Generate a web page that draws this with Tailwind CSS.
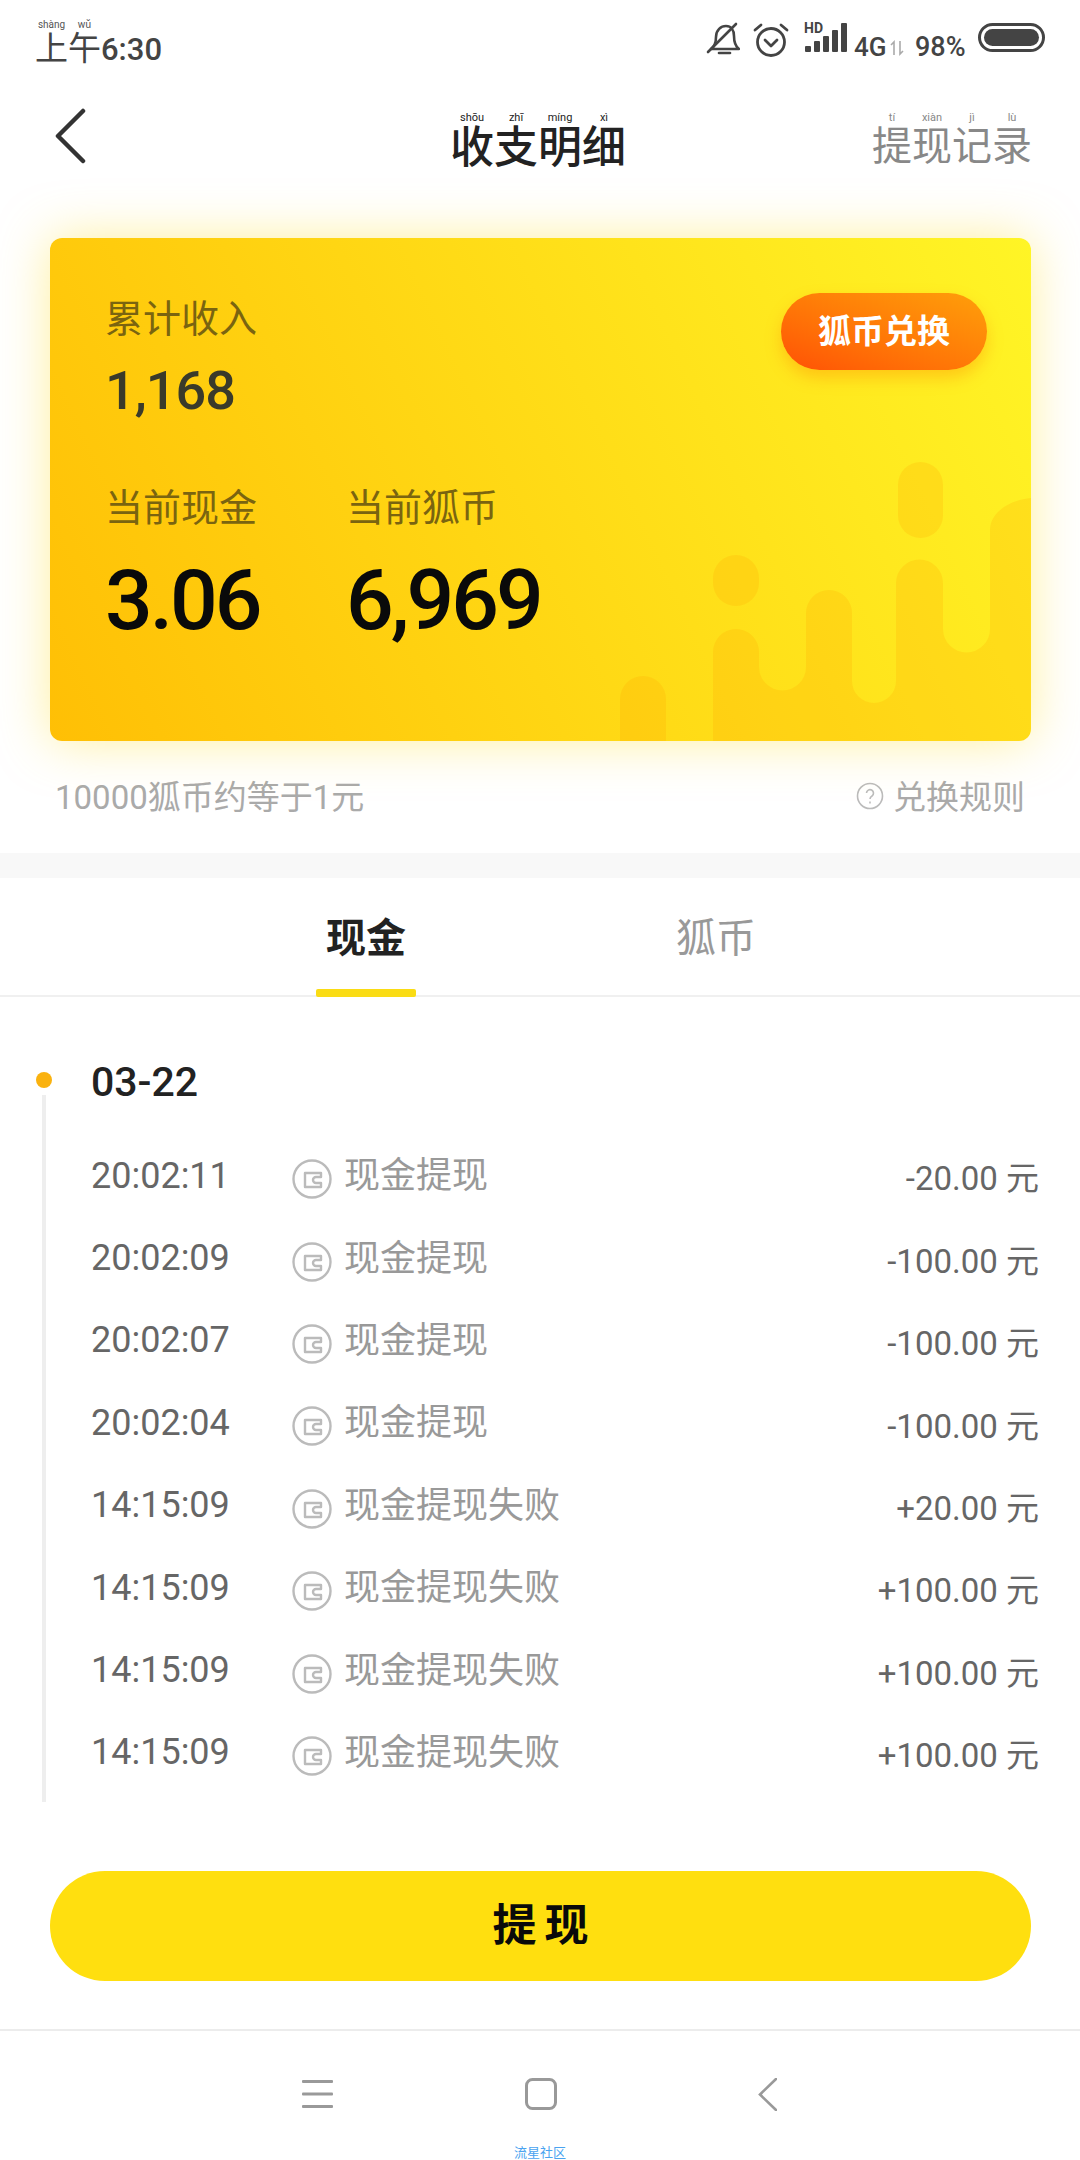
<!DOCTYPE html>
<html lang="zh-CN">
<head>
    <meta charset="UTF-8">
    <meta name="viewport" content="width=device-width, initial-scale=1.0">
    <title>收支明细</title>
    <script src="https://cdn.jsdelivr.net/npm/@tailwindcss/browser@4"></script>
</head>
<body class="bg-white font-[Roboto,'Noto_Sans_CJK_SC',sans-serif]">
<div class="w-[1080px] h-[2160px] overflow-hidden flex flex-col">

    <!-- Status bar -->
    <div class="h-[70px] flex justify-between pl-[35px] pr-[35px] text-[#444] shrink-0">
        <div class="flex items-baseline pt-[19px] h-[70px] leading-[34px]">
            <span class="text-[33px]"><ruby>上<rt class="text-[10px] leading-[10px] text-[#555]">shàng</rt></ruby><ruby>午<rt class="text-[10px] leading-[10px] text-[#555]">wǔ</rt></ruby></span>
            <span class="text-[31px] font-medium">6:30</span>
        </div>
        <div class="flex items-start pt-[22px]">
            <svg class="w-[34px] h-[34px] mr-[13px] -ml-[1px]" viewBox="0 0 34 34" fill="none" stroke="#444" stroke-width="2.6" stroke-linecap="round" stroke-linejoin="round">
                <path d="M5 27 C9 24 10 20 10 15 C10 8 15 4 20 4 C25 4 28 8 28 14 C28 20 29 24 33 27 H5 Z"/>
                <path d="M13 31 H24"/>
                <path d="M2 30 L30 2"/>
            </svg>
            <svg class="w-[36px] h-[36px] mr-[15px]" viewBox="0 0 36 36" fill="none" stroke="#444" stroke-width="2.8" stroke-linecap="round" stroke-linejoin="round">
                <circle cx="18" cy="20" r="13.5"/>
                <path d="M12 18 L18 24 L24 18"/>
                <path d="M2 8 L8 3"/>
                <path d="M34 8 L28 3"/>
            </svg>
            <div class="relative w-[44px] h-[32px] mr-[6px]">
                <svg class="w-[44px] h-[32px]" viewBox="0 0 44 32" fill="#444">
                    <rect x="1" y="24" width="6" height="6" rx="1"/>
                    <rect x="10" y="19" width="6" height="11" rx="1"/>
                    <rect x="19" y="14" width="6" height="16" rx="1"/>
                    <rect x="28" y="8" width="6" height="22" rx="1"/>
                    <rect x="37" y="1" width="6" height="29" rx="1"/>
                </svg>
                <span class="absolute left-0 top-[-2px] text-[14px] leading-[16px] font-bold">HD</span>
            </div>
            <span class="text-[26px] leading-[26px] font-medium mt-[12px] w-[36px]">4G</span>
            <svg class="w-[14px] h-[16px] mt-[18px] mr-[11px]" viewBox="0 0 14 16" fill="none" stroke="#aaa" stroke-width="1.6">
                <path d="M4 15 V2 L1 5"/>
                <path d="M10 1 V14 L13 11"/>
            </svg>
            <span class="text-[27px] leading-[26px] font-medium mt-[12px] w-[63px]">98%</span>
            <div class="w-[67px] h-[29px] mt-[1px] rounded-full border-[3px] border-[#444] p-[3px]">
                <div class="w-full h-full rounded-full bg-[#444]"></div>
            </div>
        </div>
    </div>

    <!-- Title bar -->
    <div class="h-[168px] flex items-start pl-[54px] pr-[48px] pt-[36px] shrink-0">
        <svg class="w-[32px] h-[56px] mt-[2px]" viewBox="0 0 32 56" fill="none" stroke="#333" stroke-width="4.5" stroke-linecap="round" stroke-linejoin="round">
            <path d="M29 3 L4 28 L29 53"/>
        </svg>
        <div class="flex-1 text-center text-[44px] leading-[46px] font-medium text-[#222] pl-[118px] mt-[6px]">
            <ruby>收<rt class="text-[11px] leading-[12px] font-normal">shōu</rt></ruby><ruby>支<rt class="text-[11px] leading-[12px] font-normal">zhī</rt></ruby><ruby>明<rt class="text-[11px] leading-[12px] font-normal">míng</rt></ruby><ruby>细<rt class="text-[11px] leading-[12px] font-normal">xì</rt></ruby>
        </div>
        <div class="w-[160px] text-[40px] leading-[46px] text-[#888] mt-[6px]">
            <ruby>提<rt class="text-[11px] leading-[12px]">tí</rt></ruby><ruby>现<rt class="text-[11px] leading-[12px]">xiàn</rt></ruby><ruby>记<rt class="text-[11px] leading-[12px]">jì</rt></ruby><ruby>录<rt class="text-[11px] leading-[12px]">lù</rt></ruby>
        </div>
    </div>

    <!-- Balance card -->
    <div class="pl-[50px] pr-[49px] shrink-0">
        <div class="relative h-[503px] rounded-[12px] overflow-hidden bg-linear-[65deg] from-[#ffbf05] to-[#fff526] shadow-[0_0_50px_rgba(255,225,60,0.5)] pl-[55px] pt-[58px]">
            <svg class="absolute right-0 bottom-0 w-[441px] h-[303px]" viewBox="590 438 441 303" fill="#ffa000" fill-opacity="0.2">
                <path d="M713 741 V652 a23 23 0 0 1 46 0 V667 a23.5 23.5 0 0 0 47 0 V613 a23 23 0 0 1 46 0 V681 a22 22 0 0 0 44 0 V583 a23.5 23.5 0 0 1 47 0 V629 a23.5 23.5 0 0 0 47 0 V530 C990 512 1010 500 1031 498 V741 Z"/>
                <path d="M620 741 V699 a23 23 0 0 1 46 0 V741 Z"/>
                <rect x="713" y="555" width="46" height="51" rx="23"/>
                <rect x="898" y="462" width="45" height="76" rx="22.5"/>
            </svg>
            <div class="relative text-[38px] leading-[46px] text-[#7a6410]">累计收入</div>
            <div class="relative mt-[17px] text-[54px] leading-[64px] font-medium tracking-[-1px] text-[#3a3a2a]">1,168</div>
            <div class="relative flex mt-[62px]">
                <div class="w-[241px]">
                    <div class="text-[38px] leading-[46px] text-[#7a6410]">当前现金</div>
                    <div class="mt-[24px] text-[84px] leading-[92px] font-medium tracking-[-3px] text-[#0a0a0a]">3.06</div>
                </div>
                <div>
                    <div class="text-[38px] leading-[46px] text-[#7a6410]">当前狐币</div>
                    <div class="mt-[24px] text-[84px] leading-[92px] font-medium tracking-[-3px] text-[#0a0a0a]">6,969</div>
                </div>
            </div>
            <div class="absolute right-[44px] top-[55px] w-[206px] h-[77px] rounded-full bg-linear-to-tr from-[#ff5005] to-[#ff9f0a] shadow-[0_8px_16px_rgba(255,130,0,0.35)] flex items-center justify-center text-[33px] font-bold text-white">狐币兑换</div>
        </div>
    </div>

    <!-- Exchange note -->
    <div class="h-[112px] pl-[55px] pr-[55px] pt-[35px] flex justify-between shrink-0 text-[#aaa]">
        <span class="text-[33px] leading-[44px]">10000狐币约等于1元</span>
        <span class="flex items-center h-[44px] text-[33px]">
            <svg class="w-[28px] h-[28px] mr-[9px] -mt-[4px]" viewBox="0 0 28 28" fill="none" stroke="#bbb" stroke-width="1.6">
                <circle cx="14" cy="14" r="12.5"/>
                <path d="M10.5 11 a3.5 3.5 0 1 1 5.5 3 c-1.4 .9 -2 1.6 -2 3"/>
                <path d="M14 19.5 V21.5"/>
            </svg>
            兑换规则
        </span>
    </div>

    <div class="h-[25px] bg-[#f8f8f8] shrink-0"></div>

    <!-- Tabs -->
    <div class="h-[119px] border-b-2 border-[#f0f0f0] flex shrink-0 relative">
        <div class="relative w-[100px] ml-[316px] flex justify-center pt-[38px] text-[40px] leading-[46px] font-bold text-[#222]">
            现金
            <div class="absolute left-0 right-0 -bottom-[2px] h-[8px] rounded-[2px] bg-[#fadc14]"></div>
        </div>
        <div class="ml-[260px] pt-[38px] text-[40px] leading-[46px] text-[#999]">狐币</div>
    </div>

    <!-- Timeline -->
    <div class="h-[874px] flex shrink-0">
        <div class="w-[91px] pl-[36px] pt-[75px] shrink-0">
            <div class="w-4 h-4 rounded-full bg-[#fab20f]"></div>
            <div class="ml-[6px] mt-[7px] w-[4px] h-[707px] bg-[#eeeeee]"></div>
        </div>
        <div class="flex-1 pt-[46px] pr-[41px]">
            <div class="h-[80px] flex items-center text-[41px] font-medium text-[#222]">03-22</div>
            <div id="rows" class="mt-[12px]">
                <div class="h-[82.4px] flex items-center">
                    <span class="w-[201px] -mt-[1px] text-[36px] text-[#666]">20:02:11</span>
                    <svg class="w-[40px] h-[40px] mt-[6px] mr-[12px]" viewBox="0 0 40 40" fill="none" stroke="#bbb" stroke-width="2.4"><circle cx="20" cy="20" r="18.5"/><path d="M29 14 H13 V28 H29 V24 H24 a3 3 0 0 1 0 -6 H29 Z" stroke-linejoin="round"/></svg>
                    <span class="text-[36px] text-[#999]">现金提现</span>
                    <span class="ml-auto mt-[6px] text-[33px] text-[#666]">-20.00 元</span>
                </div>
                <div class="h-[82.4px] flex items-center">
                    <span class="w-[201px] -mt-[1px] text-[36px] text-[#666]">20:02:09</span>
                    <svg class="w-[40px] h-[40px] mt-[6px] mr-[12px]" viewBox="0 0 40 40" fill="none" stroke="#bbb" stroke-width="2.4"><circle cx="20" cy="20" r="18.5"/><path d="M29 14 H13 V28 H29 V24 H24 a3 3 0 0 1 0 -6 H29 Z" stroke-linejoin="round"/></svg>
                    <span class="text-[36px] text-[#999]">现金提现</span>
                    <span class="ml-auto mt-[6px] text-[33px] text-[#666]">-100.00 元</span>
                </div>
                <div class="h-[82.4px] flex items-center">
                    <span class="w-[201px] -mt-[1px] text-[36px] text-[#666]">20:02:07</span>
                    <svg class="w-[40px] h-[40px] mt-[6px] mr-[12px]" viewBox="0 0 40 40" fill="none" stroke="#bbb" stroke-width="2.4"><circle cx="20" cy="20" r="18.5"/><path d="M29 14 H13 V28 H29 V24 H24 a3 3 0 0 1 0 -6 H29 Z" stroke-linejoin="round"/></svg>
                    <span class="text-[36px] text-[#999]">现金提现</span>
                    <span class="ml-auto mt-[6px] text-[33px] text-[#666]">-100.00 元</span>
                </div>
                <div class="h-[82.4px] flex items-center">
                    <span class="w-[201px] -mt-[1px] text-[36px] text-[#666]">20:02:04</span>
                    <svg class="w-[40px] h-[40px] mt-[6px] mr-[12px]" viewBox="0 0 40 40" fill="none" stroke="#bbb" stroke-width="2.4"><circle cx="20" cy="20" r="18.5"/><path d="M29 14 H13 V28 H29 V24 H24 a3 3 0 0 1 0 -6 H29 Z" stroke-linejoin="round"/></svg>
                    <span class="text-[36px] text-[#999]">现金提现</span>
                    <span class="ml-auto mt-[6px] text-[33px] text-[#666]">-100.00 元</span>
                </div>
                <div class="h-[82.4px] flex items-center">
                    <span class="w-[201px] -mt-[1px] text-[36px] text-[#666]">14:15:09</span>
                    <svg class="w-[40px] h-[40px] mt-[6px] mr-[12px]" viewBox="0 0 40 40" fill="none" stroke="#bbb" stroke-width="2.4"><circle cx="20" cy="20" r="18.5"/><path d="M29 14 H13 V28 H29 V24 H24 a3 3 0 0 1 0 -6 H29 Z" stroke-linejoin="round"/></svg>
                    <span class="text-[36px] text-[#999]">现金提现失败</span>
                    <span class="ml-auto mt-[6px] text-[33px] text-[#666]">+20.00 元</span>
                </div>
                <div class="h-[82.4px] flex items-center">
                    <span class="w-[201px] -mt-[1px] text-[36px] text-[#666]">14:15:09</span>
                    <svg class="w-[40px] h-[40px] mt-[6px] mr-[12px]" viewBox="0 0 40 40" fill="none" stroke="#bbb" stroke-width="2.4"><circle cx="20" cy="20" r="18.5"/><path d="M29 14 H13 V28 H29 V24 H24 a3 3 0 0 1 0 -6 H29 Z" stroke-linejoin="round"/></svg>
                    <span class="text-[36px] text-[#999]">现金提现失败</span>
                    <span class="ml-auto mt-[6px] text-[33px] text-[#666]">+100.00 元</span>
                </div>
                <div class="h-[82.4px] flex items-center">
                    <span class="w-[201px] -mt-[1px] text-[36px] text-[#666]">14:15:09</span>
                    <svg class="w-[40px] h-[40px] mt-[6px] mr-[12px]" viewBox="0 0 40 40" fill="none" stroke="#bbb" stroke-width="2.4"><circle cx="20" cy="20" r="18.5"/><path d="M29 14 H13 V28 H29 V24 H24 a3 3 0 0 1 0 -6 H29 Z" stroke-linejoin="round"/></svg>
                    <span class="text-[36px] text-[#999]">现金提现失败</span>
                    <span class="ml-auto mt-[6px] text-[33px] text-[#666]">+100.00 元</span>
                </div>
                <div class="h-[82.4px] flex items-center">
                    <span class="w-[201px] -mt-[1px] text-[36px] text-[#666]">14:15:09</span>
                    <svg class="w-[40px] h-[40px] mt-[6px] mr-[12px]" viewBox="0 0 40 40" fill="none" stroke="#bbb" stroke-width="2.4"><circle cx="20" cy="20" r="18.5"/><path d="M29 14 H13 V28 H29 V24 H24 a3 3 0 0 1 0 -6 H29 Z" stroke-linejoin="round"/></svg>
                    <span class="text-[36px] text-[#999]">现金提现失败</span>
                    <span class="ml-auto mt-[6px] text-[33px] text-[#666]">+100.00 元</span>
                </div>
            </div>
        </div>
    </div>

    <!-- Withdraw button -->
    <div class="h-[160px] pl-[50px] pr-[49px] border-b-2 border-[#ececec] shrink-0">
        <div class="h-[110px] pl-[8px] rounded-full bg-[#ffdf0f] flex items-center justify-center text-[44px] font-bold tracking-[8px] text-[#0a0a0a]">提现</div>
    </div>

    <!-- Nav bar -->
    <div class="flex-1">
        <div class="flex items-center h-[126px] pl-[302px]">
            <svg class="w-[31px] h-[28px]" viewBox="0 0 31 28" fill="#999">
                <rect x="0" y="0" width="31" height="3" rx="1"/>
                <rect x="0" y="12.5" width="31" height="3" rx="1"/>
                <rect x="0" y="25" width="31" height="3" rx="1"/>
            </svg>
            <svg class="w-[32px] h-[32px] ml-[192px]" viewBox="0 0 32 32" fill="none" stroke="#999" stroke-width="3">
                <rect x="1.5" y="1.5" width="29" height="29" rx="6"/>
            </svg>
            <svg class="w-[19px] h-[33px] ml-[201px]" viewBox="0 0 19 33" fill="none" stroke="#999" stroke-width="2.6" stroke-linecap="round">
                <path d="M18 1 L2 16.5 L18 32"/>
            </svg>
        </div>
        <div class="-mt-[11px] text-center text-[13px] leading-[14px] text-[#4aa3f0]">流星社区</div>
    </div>

</div>
</body>
</html>
